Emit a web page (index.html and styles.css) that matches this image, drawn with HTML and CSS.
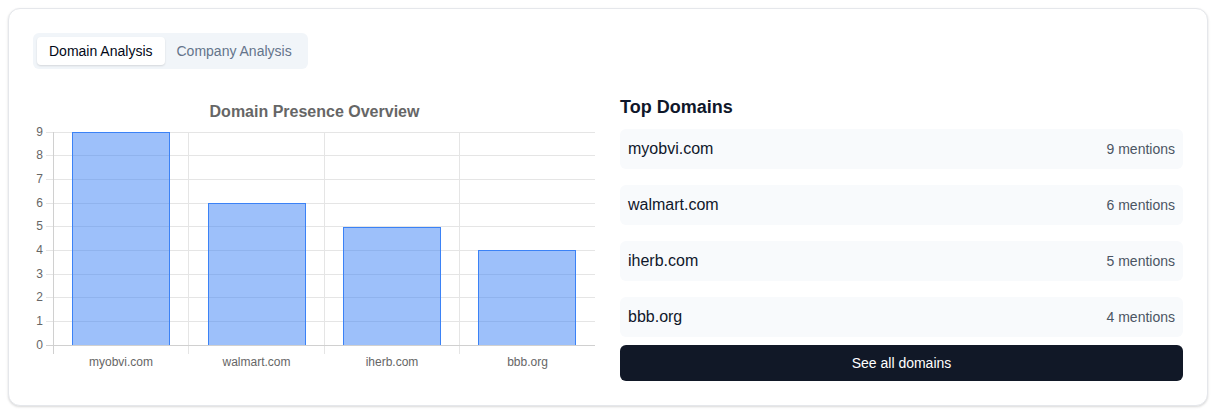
FILE: index.html
```html
<!DOCTYPE html>
<html>
<head>
<meta charset="utf-8">
<link rel="stylesheet" href="styles.css">
</head>
<body>
<div class="card">
  <div class="tabs">
    <button class="tab active">Domain Analysis</button>
    <button class="tab">Company Analysis</button>
  </div>
  <div class="content">
    <div class="chart">
      <svg width="563" height="288" viewBox="0 0 563 288" xmlns="http://www.w3.org/2000/svg">
        <text class="title" x="281.5" y="24" text-anchor="middle">Domain Presence Overview</text>
        <g class="grid" shape-rendering="crispEdges">
          <line x1="13" x2="562" y1="39.5" y2="39.5"/>
          <line x1="13" x2="562" y1="62.5" y2="62.5"/>
          <line x1="13" x2="562" y1="86.5" y2="86.5"/>
          <line x1="13" x2="562" y1="110.5" y2="110.5"/>
          <line x1="13" x2="562" y1="133.5" y2="133.5"/>
          <line x1="13" x2="562" y1="157.5" y2="157.5"/>
          <line x1="13" x2="562" y1="181.5" y2="181.5"/>
          <line x1="13" x2="562" y1="204.5" y2="204.5"/>
          <line x1="13" x2="562" y1="228.5" y2="228.5"/>
          <line x1="155.5" x2="155.5" y1="39" y2="261"/>
          <line x1="291.5" x2="291.5" y1="39" y2="261"/>
          <line x1="426.5" x2="426.5" y1="39" y2="261"/>
        </g>
        <g class="bars" shape-rendering="crispEdges">
          <rect x="39.5" y="39.5" width="97" height="213"/>
          <rect x="175.5" y="110.5" width="97" height="142"/>
          <rect x="310.5" y="134.5" width="97" height="118"/>
          <rect x="445.5" y="157.5" width="97" height="95"/>
        </g>
        <g class="axis" shape-rendering="crispEdges">
          <line x1="20.5" x2="20.5" y1="39" y2="261"/>
          <line x1="13" x2="562" y1="252.5" y2="252.5"/>
        </g>
        <g class="ticks" text-anchor="end">
          <text x="10" y="43">9</text>
          <text x="10" y="66">8</text>
          <text x="10" y="90">7</text>
          <text x="10" y="114">6</text>
          <text x="10" y="137">5</text>
          <text x="10" y="161">4</text>
          <text x="10" y="185">3</text>
          <text x="10" y="208">2</text>
          <text x="10" y="232">1</text>
          <text x="10" y="256">0</text>
        </g>
        <g class="ticks" text-anchor="middle">
          <text x="88" y="273">myobvi.com</text>
          <text x="223.5" y="273">walmart.com</text>
          <text x="359" y="273">iherb.com</text>
          <text x="494.5" y="273">bbb.org</text>
        </g>
      </svg>
    </div>
    <div class="domains">
      <h3 class="heading">Top Domains</h3>
      <ul class="list">
        <li class="item"><span class="name">myobvi.com</span><span class="count">9 mentions</span></li>
        <li class="item"><span class="name">walmart.com</span><span class="count">6 mentions</span></li>
        <li class="item"><span class="name">iherb.com</span><span class="count">5 mentions</span></li>
        <li class="item"><span class="name">bbb.org</span><span class="count">4 mentions</span></li>
      </ul>
      <button class="see-all">See all domains</button>
    </div>
  </div>
</div>
</body>
</html>
```

FILE: styles.css
```css
* { box-sizing: border-box; }
html, body { margin: 0; padding: 0; background: #ffffff; }
body {
  padding: 8px;
  font-family: "Liberation Sans", Arial, sans-serif;
  color: #0f172a;
}
.card {
  width: 1200px;
  border: 1px solid #e5e7eb;
  border-radius: 12px;
  background: #fff;
  box-shadow: 0 1px 3px rgba(0,0,0,0.1), 0 1px 2px rgba(0,0,0,0.06);
  padding: 24px;
}
.tabs {
  display: inline-flex;
  height: 36px;
  padding: 4px;
  background: #f1f5f9;
  border-radius: 6px;
  align-items: stretch;
}
.tab {
  border: 0;
  background: transparent;
  font-family: inherit;
  font-size: 14px;
  color: #64748b;
  padding: 0 12px;
  border-radius: 4px;
  cursor: pointer;
}
.tab.active {
  background: #fff;
  color: #020817;
  box-shadow: 0 1px 2px rgba(0,0,0,0.12);
}
.content {
  margin-top: 24px;
  display: grid;
  grid-template-columns: 1fr 1fr;
  gap: 24px;
}
.chart svg { display: block; }
.title {
  font-family: "Liberation Sans", Arial, sans-serif;
  font-size: 16px;
  font-weight: bold;
  fill: #666;
}
.grid line { stroke: #e5e5e5; stroke-width: 1; }
.axis line { stroke: #d0d0d0; stroke-width: 1; }
.bars rect {
  fill: rgba(59,130,246,0.5);
  stroke: rgb(59,130,246);
  stroke-width: 1;
}
.ticks text {
  font-family: "Liberation Sans", Arial, sans-serif;
  font-size: 12px;
  fill: #666;
}
.heading {
  margin: 0 0 8px;
  font-size: 18px;
  line-height: 28px;
  font-weight: bold;
  color: #0f172a;
}
.list {
  list-style: none;
  margin: 0;
  padding: 0;
  display: flex;
  flex-direction: column;
  gap: 16px;
}
.item {
  height: 40px;
  background: #f8fafc;
  border-radius: 6px;
  padding: 0 8px;
  display: flex;
  align-items: center;
  justify-content: space-between;
}
.name { font-size: 16px; color: #0f172a; }
.count { font-size: 14px; color: #4b5563; }
.see-all {
  margin-top: 8px;
  width: 100%;
  height: 36px;
  border: 0;
  border-radius: 6px;
  background: #111827;
  color: #fff;
  font-family: inherit;
  font-size: 14px;
  display: block;
}
```
